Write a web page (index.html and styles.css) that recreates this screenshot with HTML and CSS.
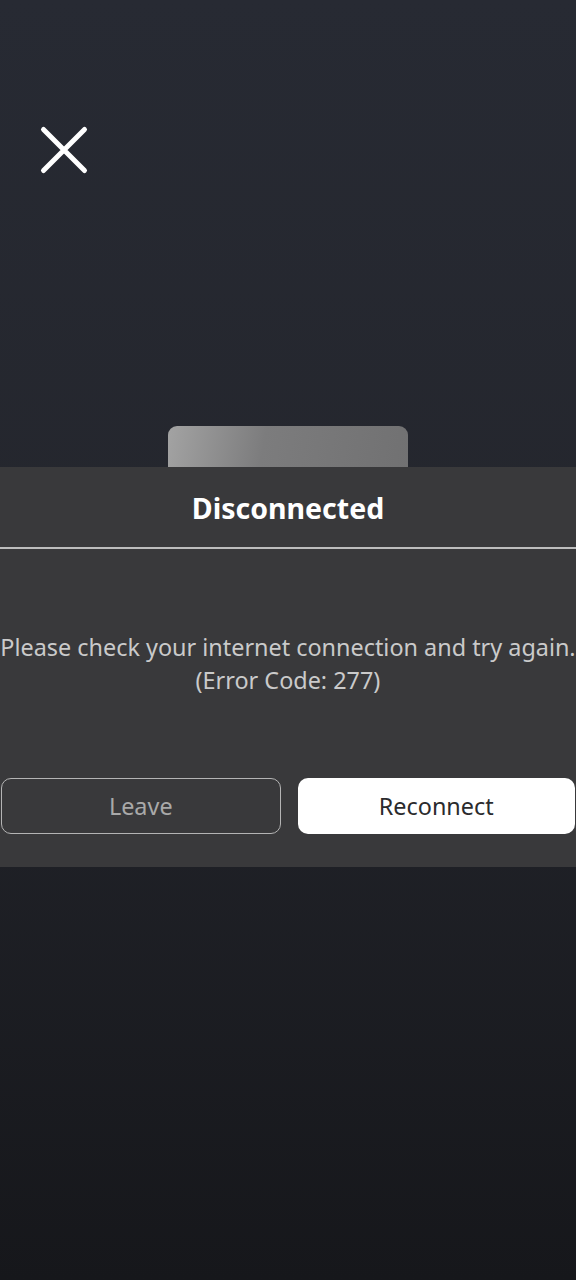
FILE: index.html
```html
<!DOCTYPE html>
<html>
<head>
<meta charset="utf-8">
<link rel="stylesheet" href="styles.css">
</head>
<body>
<div class="screen">
  <div class="top">
    <div class="close">
      <svg width="50" height="50" viewBox="0 0 50 50"><path d="M4.5 4.5 L45.5 45.5 M45.5 4.5 L4.5 45.5" stroke="#ffffff" stroke-width="5" stroke-linecap="round" fill="none"/></svg>
    </div>
  </div>
  <div class="tab-row"><div class="tab"></div></div>
  <div class="dialog">
    <div class="title">Disconnected</div>
    <div class="divider"></div>
    <div class="message">Please check your internet connection and try again.<br>(Error Code: 277)</div>
    <div class="buttons">
      <div class="btn leave">Leave</div>
      <div class="btn reconnect">Reconnect</div>
    </div>
  </div>
</div>
</body>
</html>
```

FILE: styles.css
```css
html, body {
  margin: 0;
  padding: 0;
}
body {
  width: 576px;
  height: 1280px;
  background: linear-gradient(to bottom, #272a33 0%, #24262d 45%, #16171b 100%);
  font-family: "Noto Sans", "Open Sans", sans-serif;
  overflow: hidden;
}
.screen {
  display: flex;
  flex-direction: column;
}
.top {
  height: 426px;
  box-sizing: border-box;
  padding: 125px 0 0 39px;
}
.close {
  width: 50px;
  height: 50px;
}
.close svg { display: block; }
.tab-row {
  display: flex;
  justify-content: flex-start;
  padding-left: 168px;
}
.tab {
  width: 240px;
  height: 41px;
  border-radius: 9px 9px 0 0;
  background: linear-gradient(100deg, #a3a3a3 0%, #7c7c7d 40%, #717172 100%);
}
.dialog {
  background: #39393b;
  height: 400px;
  display: flex;
  flex-direction: column;
}
.title {
  height: 80px;
  display: flex;
  align-items: center;
  justify-content: center;
  color: #ffffff;
  font-weight: 700;
  font-size: 28.5px;
  padding-top: 1px;
  box-sizing: border-box;
}
.divider {
  height: 2px;
  background: #bdbdbd;
}
.message {
  margin-top: 82px;
  text-align: center;
  color: #cacaca;
  font-size: 23.4px;
  line-height: 33px;
  white-space: nowrap;
}
.buttons {
  margin-top: 81px;
  display: flex;
  gap: 17px;
  padding: 0 1px;
}
.btn {
  flex: 1;
  height: 56px;
  box-sizing: border-box;
  border-radius: 10px;
  display: flex;
  align-items: center;
  justify-content: center;
  font-size: 23.4px;
}
.leave {
  border: 1.5px solid #b4b4b4;
  color: #a9a9a9;
}
.reconnect {
  background: #ffffff;
  color: #2b2b2d;
}
```
